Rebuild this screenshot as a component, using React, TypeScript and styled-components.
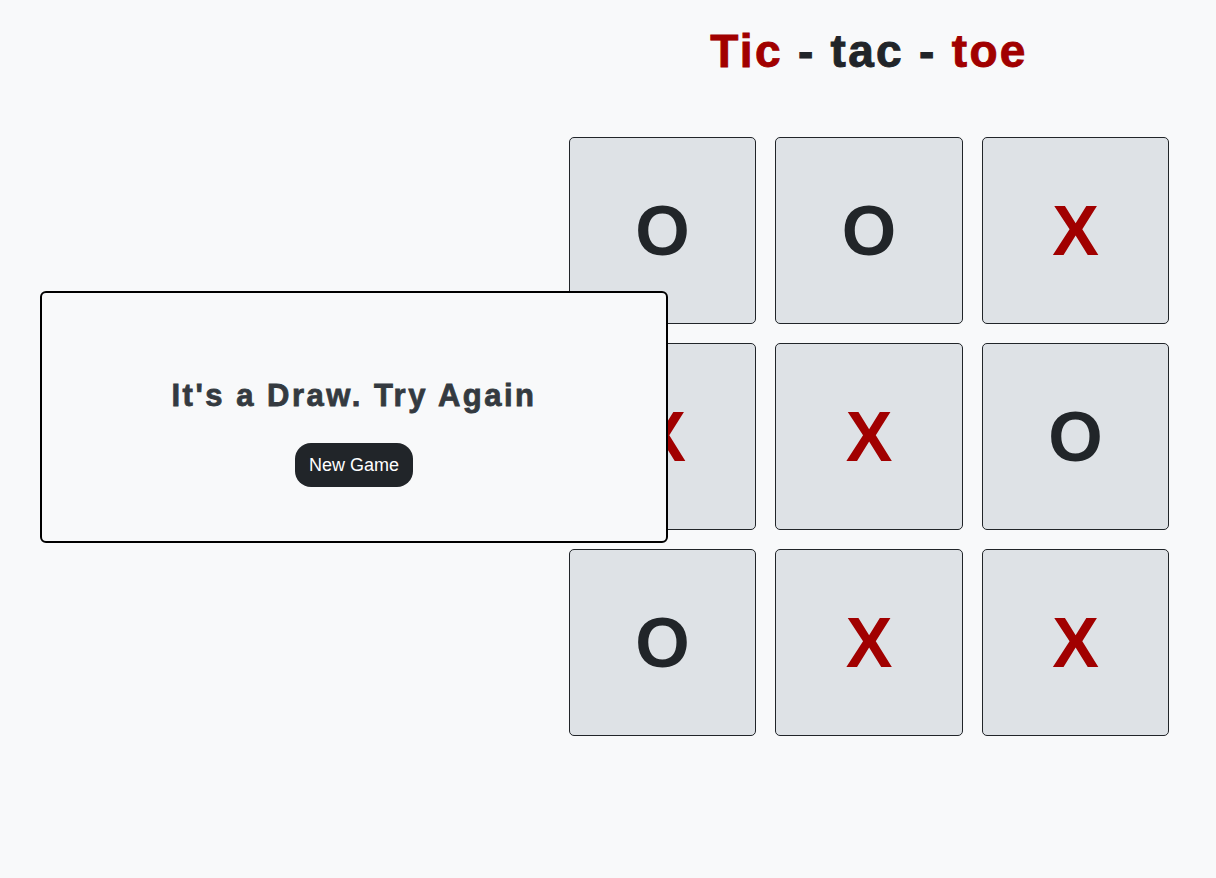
import React from "react";
import styled, { createGlobalStyle } from "styled-components";

const GlobalStyle = createGlobalStyle`
  html, body {
    margin: 0;
    padding: 0;
    background: #f8f9fa;
    font-family: "Liberation Sans", Arial, sans-serif;
  }
  #root {
    min-height: 878px;
  }
`;

const Page = styled.main`
  position: relative;
  display: flex;
  justify-content: flex-end;
  padding: 24px 47px 0 0;
  min-height: 878px;
  box-sizing: border-box;
`;

const GameColumn = styled.section`
  display: flex;
  flex-direction: column;
  align-items: center;
  width: 600px;
`;

const Title = styled.h1`
  margin: 0;
  font-size: 46px;
  line-height: 55px;
  font-weight: 700;
  letter-spacing: 2.3px;
  -webkit-text-stroke: 0.9px #212529;
  color: #212529;
  white-space: nowrap;
`;

const Red = styled.span`
  color: #a10000;
  -webkit-text-stroke: 0.9px #a10000;
`;

const Board = styled.div`
  margin-top: 58px;
  display: grid;
  grid-template-columns: repeat(3, 187.5px);
  grid-template-rows: repeat(3, 187px);
  column-gap: 19px;
  row-gap: 19px;
`;

const Cell = styled.button<{ $mark: "X" | "O" }>`
  display: flex;
  align-items: center;
  justify-content: center;
  padding: 0;
  background: #dee2e6;
  border: 1px solid #212529;
  border-radius: 5px;
  font-family: "Liberation Sans", Arial, sans-serif;
  font-weight: 700;
  font-size: 70px;
  line-height: 1;
  color: ${(p) => (p.$mark === "X" ? "#a10000" : "#212529")};
`;

const Modal = styled.div`
  position: absolute;
  left: 40px;
  top: 291px;
  width: 628px;
  height: 252px;
  box-sizing: border-box;
  border: 2px solid #000;
  border-radius: 6px;
  background: #f8f9fa;
  display: flex;
  flex-direction: column;
  align-items: center;
  justify-content: center;
  padding-top: 30px;
`;

const Message = styled.h2`
  margin: 0 0 29px;
  font-size: 31px;
  line-height: 37px;
  font-weight: 700;
  letter-spacing: 2.5px;
  -webkit-text-stroke: 0.8px #343a40;
  color: #343a40;
`;

const NewGameButton = styled.button`
  height: 44px;
  padding: 0 14px;
  border: none;
  border-radius: 16px;
  background: #212529;
  color: #fff;
  font-family: "Liberation Sans", Arial, sans-serif;
  font-size: 18px;
`;

const board: ("X" | "O")[] = ["O", "O", "X", "X", "X", "O", "O", "X", "X"];

export default function App() {
  return (
    <>
      <GlobalStyle />
      <Page>
        <GameColumn>
          <Title>
            <Red>Tic</Red> - tac - <Red>toe</Red>
          </Title>
          <Board>
            {board.map((m, i) => (
              <Cell key={i} $mark={m}>
                {m}
              </Cell>
            ))}
          </Board>
        </GameColumn>
        <Modal>
          <Message>It's a Draw. Try Again</Message>
          <NewGameButton>New Game</NewGameButton>
        </Modal>
      </Page>
    </>
  );
}
